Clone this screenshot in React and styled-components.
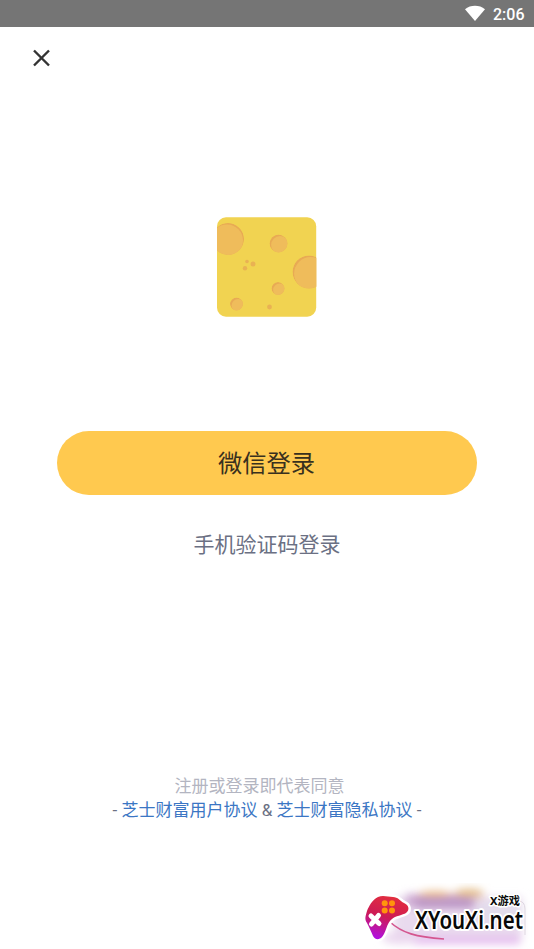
import React from "react";
import styled, { createGlobalStyle } from "styled-components";

const GlobalStyle = createGlobalStyle`
  * { box-sizing: border-box; }
  body {
    margin: 0;
    background: #fff;
    font-family: Roboto, "Noto Sans CJK SC", sans-serif;
  }
`;

const Screen = styled.div`
  position: relative;
  width: 534px;
  height: 949px;
  overflow: hidden;
  display: flex;
  flex-direction: column;
  background: #fff;
`;

const StatusBar = styled.header`
  flex: none;
  height: 27px;
  padding: 2px 9.5px 0 0;
  display: flex;
  align-items: center;
  justify-content: flex-end;
  gap: 8px;
  background: #757575;
  color: #fff;
`;

const WifiIcon = styled.svg`
  display: block;
  width: 20px;
  height: 16px;
  margin-top: -3px;
`;

const Clock = styled.span`
  font-size: 16px;
  line-height: 20px;
  font-weight: 500;
`;

const NavBar = styled.nav`
  flex: none;
  height: 62px;
  padding-left: 32px;
  display: flex;
  align-items: center;
`;

const CloseButton = styled.button`
  padding: 0;
  border: 0;
  background: none;
  display: block;

  svg { display: block; }
`;

const Main = styled.main`
  flex: 1;
  padding-top: 128px;
  display: flex;
  flex-direction: column;
  align-items: center;
`;

const AppLogo = styled.svg`
  display: block;
  width: 100px;
  height: 100px;
  margin-right: 1px;
`;

const LoginButton = styled.button`
  width: 420px;
  height: 64px;
  margin: 114px 1px 0 0;
  padding: 2px 0 0;
  border: 0;
  border-radius: 32px;
  background: #ffc94f;
  color: #38301e;
  font-family: inherit;
  font-size: 24.3px;
  line-height: 62px;
`;

const PhoneLogin = styled.button`
  margin-top: 34px;
  padding: 0;
  border: 0;
  background: none;
  color: #6b7083;
  font-family: inherit;
  font-size: 21px;
  line-height: 32px;
`;

const Agreement = styled.footer`
  margin-top: 213px;
  display: flex;
  flex-direction: column;
  align-items: center;
  font-size: 17px;
  line-height: 24px;
`;

const Notice = styled.p`
  margin: 0 15px 0 0;
  color: #b3b5c1;
`;

const Policies = styled.p`
  margin: 0;
  color: #6b7083;
  white-space: nowrap;
`;

const PolicyLink = styled.a`
  color: #3b76c4;
`;

const Watermark = styled.svg`
  position: absolute;
  right: 0;
  bottom: 0;
  width: 180px;
  height: 66px;
`;

const holes = [
  { x: 11, y: 22, r: 16 },
  { x: 61.5, y: 26.5, r: 9 },
  { x: 92, y: 55, r: 16.5 },
  { x: 61, y: 71.5, r: 6.5 },
  { x: 19.5, y: 87, r: 6.5 },
];

const specks = [
  { x: 30, y: 44.5, r: 1.8 },
  { x: 36, y: 47, r: 2.5 },
  { x: 28, y: 51.3, r: 2.2 },
  { x: 52.5, y: 90, r: 2.4 },
];

function CheeseLogo() {
  return (
    <AppLogo viewBox="0 0 100 100">
      <defs>
        <clipPath id="cheese"><rect width="99.2" height="99.5" x="0" y=".25" rx="9" /></clipPath>
        {holes.map((h, i) => (
          <clipPath id={`hole${i}`} key={i}><circle cx={h.x} cy={h.y} r={h.r} /></clipPath>
        ))}
      </defs>
      <g clipPath="url(#cheese)">
        <rect width="100" height="100" fill="#f1d351" />
        {holes.map((h, i) => (
          <g key={i} clipPath={`url(#hole${i})`}>
            <circle cx={h.x} cy={h.y} r={h.r} fill="#e8aa54" />
            <circle cx={h.x + (i === 0 ? -1 : 1.6)} cy={h.y + 1.6} r={h.r} fill="#efbc5b" />
          </g>
        ))}
        {specks.map((s, i) => (
          <circle key={i} cx={s.x} cy={s.y} r={s.r} fill="#e9b253" />
        ))}
      </g>
    </AppLogo>
  );
}

const PAD =
  "M24 14 C29 12 34 14 39 14 C44 14 46 18 50 20 C55 22 56 27 52 30 C49 32 41 33 38 36 C33 40 33 45 30 51 C27 57 22 58 19 53 C17 48 15 44 13 40 C10 36 12 32 13 28 C15 23 18 17 24 14Z";

function SiteMark() {
  return (
    <Watermark viewBox="0 0 180 66">
      <defs>
        <filter id="glow" x="-30%" y="-60%" width="160%" height="220%">
          <feGaussianBlur stdDeviation="4.5" />
        </filter>
        <filter id="softGlow" filterUnits="userSpaceOnUse" x="0" y="0" width="180" height="66">
          <feGaussianBlur stdDeviation="4" />
        </filter>
        <linearGradient id="pad" x1=".6" y1="0" x2=".3" y2="1">
          <stop offset="0" stopColor="#e22e3e" />
          <stop offset=".48" stopColor="#cd1b55" />
          <stop offset="1" stopColor="#b010e3" />
        </linearGradient>
      </defs>
      <g filter="url(#glow)">
        <rect x="40" y="14" width="128" height="43" fill="#e9daee" />
        <rect x="52" y="11" width="66" height="13" fill="#cda8d2" />
        <ellipse cx="81" cy="12" rx="17" ry="4" fill="#e8b98a" />
        <ellipse cx="115" cy="11" rx="15" ry="5" fill="#e3bb87" />
        <rect x="122" y="20" width="44" height="20" fill="#e2dceb" />
        <rect x="58" y="54" width="108" height="7" fill="#e4b8ee" />
        <ellipse cx="46" cy="55" rx="18" ry="6" fill="#ead6ee" />
      </g>
      <g filter="url(#softGlow)">
        <path d="M62 20h58" stroke="#b18abf" strokeWidth="6" />
      </g>
      <path d="M36 39C48 50 62 54 90 56" fill="none" stroke="#d4568f" strokeWidth="1.6" />
      <path d="M164 18Q171 18 171 26V52" fill="none" stroke="#ded7e1" strokeWidth="1" />
      <path d={PAD} fill="#fff" stroke="#fff" strokeWidth="5" strokeLinejoin="round" />
      <path d={PAD} fill="url(#pad)" />
      <g fill="#ff950c">
        <circle cx="30.7" cy="20.3" r="3" />
        <circle cx="38" cy="20.3" r="3" />
        <circle cx="30.7" cy="27.5" r="3" />
        <circle cx="38" cy="27.5" r="3" />
      </g>
      <path d="M17 33l8 7.5M24.5 32.5l-7 8.5" stroke="#fff" strokeWidth="5" strokeLinecap="round" />
      <g fill="#080808" stroke="#fff" strokeLinejoin="round" paintOrder="stroke">
        <text x="61" y="46" fontFamily="'Noto Sans', sans-serif" fontSize="24.5" fontWeight="600" strokeWidth="4" textLength="108" lengthAdjust="spacingAndGlyphs">XYouXi.net</text>
        <text x="136" y="22" fontFamily="'Noto Sans', 'Noto Sans CJK SC', sans-serif" fontSize="11" fontWeight="700" strokeWidth="3" textLength="30" lengthAdjust="spacingAndGlyphs">X游戏</text>
      </g>
    </Watermark>
  );
}

export default function App() {
  return (
    <Screen>
      <GlobalStyle />
      <StatusBar>
        <WifiIcon viewBox="0 0 20 16">
          <path d="M0 4.2C5.5-.4 14.5-.4 20 4.2L10 16Z" fill="#fff" />
        </WifiIcon>
        <Clock>2:06</Clock>
      </StatusBar>
      <NavBar>
        <CloseButton aria-label="关闭">
          <svg width="19" height="19" viewBox="0 0 19 19">
            <path d="M2 1.5l15 15M17 1.5l-15 15" stroke="#333" strokeWidth="2.4" />
          </svg>
        </CloseButton>
      </NavBar>
      <Main>
        <CheeseLogo />
        <LoginButton>微信登录</LoginButton>
        <PhoneLogin>手机验证码登录</PhoneLogin>
        <Agreement>
          <Notice>注册或登录即代表同意</Notice>
          <Policies>
            - <PolicyLink>芝士财富用户协议</PolicyLink> &amp; <PolicyLink>芝士财富隐私协议</PolicyLink> -
          </Policies>
        </Agreement>
      </Main>
      <SiteMark />
    </Screen>
  );
}
